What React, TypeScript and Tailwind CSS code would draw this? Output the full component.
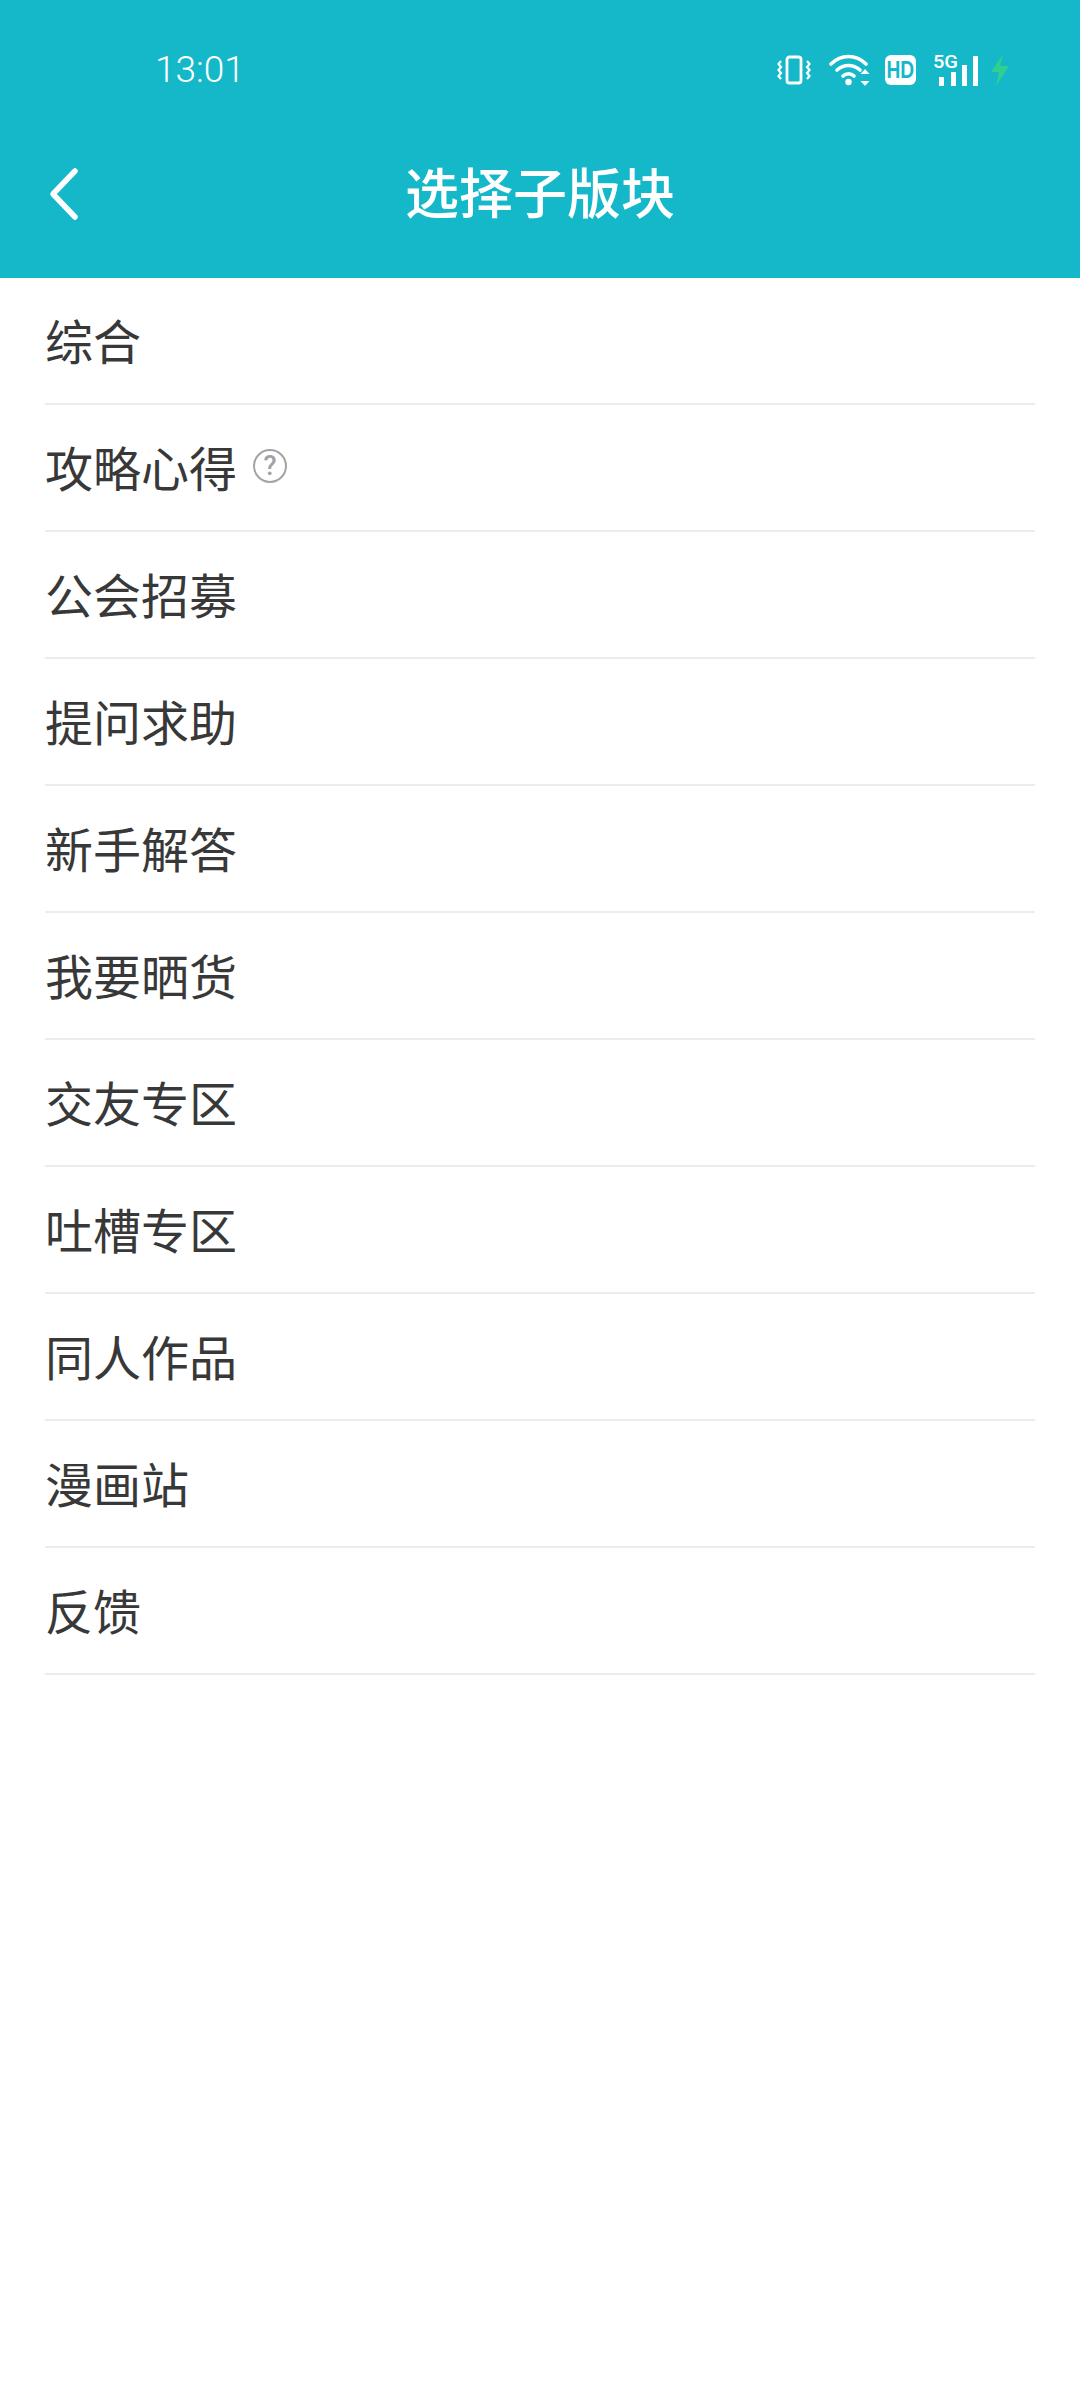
import React from 'react';

const cjk = '[font-family:"Noto_Sans_CJK_SC","Noto_Sans",sans-serif]';

const sections = ['综合', '攻略心得', '公会招募', '提问求助', '新手解答', '我要晒货', '交友专区', '吐槽专区', '同人作品', '漫画站', '反馈'];

const StatusIcons: React.FC = () => (
  <div className="flex items-center">
    {/* vibrate */}
    <svg width="34" height="30" viewBox="0 0 34 30" fill="none" stroke="white" strokeWidth="2.8">
      <rect x="10" y="2" width="14" height="26" rx="2.5" />
      <path d="M4 6l-2.5 3L4 12l-2.5 3L4 18l-2.5 3 2.5 3M30 6l2.5 3L30 12l2.5 3L30 18l2.5 3-2.5 3" strokeWidth="2.2" />
    </svg>
    {/* wifi with arrows */}
    <svg width="42" height="32" viewBox="0 0 42 32" fill="white" className="ml-[18px]">
      <path d="M2 10C12 0 27 0 37 10" fill="none" stroke="white" strokeWidth="3.6" strokeLinecap="round" />
      <path d="M8 16c7-6 16-6 23 0" fill="none" stroke="white" strokeWidth="3.6" strokeLinecap="round" />
      <path d="M14 22c3-3 8-3 11 0" fill="none" stroke="white" strokeWidth="3.6" strokeLinecap="round" />
      <circle cx="19.5" cy="28" r="3.2" />
      <path d="M36 15l4.5 5h-9zM36 32l-4.5-5h9z" />
    </svg>
    {/* HD */}
    <div className="ml-[14px] w-[31px] h-[30px] rounded-[6px] bg-white flex items-center justify-center text-[#14b8c8] text-[24px] leading-none font-bold [font-family:'Liberation_Sans',sans-serif]">
      <span className="scale-x-[0.8]">HD</span>
    </div>
    {/* 5G signal */}
    <svg width="46" height="34" viewBox="0 0 46 34" fill="white" className="ml-[17px] overflow-visible">
      <text x="0" y="15" fontSize="19" fontWeight="500" fontFamily="Roboto, sans-serif" textLength="25" lengthAdjust="spacingAndGlyphs">5G</text>
      <rect x="6" y="24" width="5" height="9" />
      <rect x="18" y="19" width="5" height="14" />
      <rect x="29" y="12" width="5" height="21" />
      <rect x="40" y="3" width="5" height="30" />
    </svg>
    {/* charging bolt */}
    <svg width="20" height="32" viewBox="0 0 20 32" fill="#2fd08f" className="ml-[11px]">
      <path d="M13 0L1 18h8l-3 14 13-20h-9z" />
    </svg>
  </div>
);

export default function App() {
  return (
    <div className={`w-[1080px] h-[2400px] bg-white flex flex-col ${cjk}`}>
      <header className="h-[278px] bg-[#14b8c8] text-white flex flex-col">
        <div className="h-[136px] flex items-center justify-between pl-[155px] pr-[70px] pt-[4px]">
          <span className="text-[37px] font-light leading-none [font-family:Roboto,sans-serif] -mt-[2px]">13:01</span>
          <StatusIcons />
        </div>
        <div className="relative h-[116px] flex items-center justify-center">
          <svg className="absolute left-[44px] top-[30px]" width="40" height="56" viewBox="0 0 40 56" fill="none" stroke="white" strokeWidth="5.5" strokeLinecap="round" strokeLinejoin="round">
            <path d="M31 5L9 28l22 23" />
          </svg>
          <h1 className="text-[54px] leading-none font-medium -mt-[6px]">选择子版块</h1>
        </div>
      </header>
      <ul className="pl-[45px] pr-[45px]">
        {sections.map((name) => (
          <li key={name} className="h-[127px] border-b-2 border-[#ececec] flex items-center gap-[16px] text-[48px] leading-none text-[#383838] pb-[4px]">
            <span>{name}</span>
            {name === '攻略心得' && (
              <span className="w-[34px] h-[34px] mt-[1px] rounded-full border-2 border-[#a3a3a3] text-[#a3a3a3] flex items-center justify-center text-[27px] font-medium leading-none [font-family:Roboto,sans-serif]">
                ?
              </span>
            )}
          </li>
        ))}
      </ul>
    </div>
  );
}
